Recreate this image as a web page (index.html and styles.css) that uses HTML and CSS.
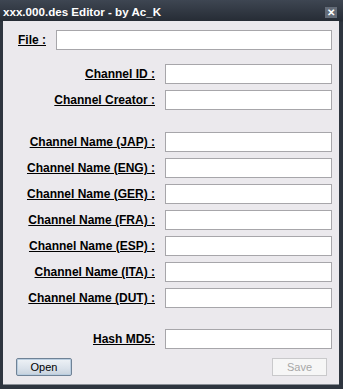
FILE: index.html
```html
<!DOCTYPE html>
<html>
<head>
<meta charset="utf-8">
<link rel="stylesheet" href="styles.css">
</head>
<body>
<div class="window">
  <div class="titlebar">
    <span class="title">xxx.000.des Editor - by Ac_K</span>
    <span class="close">✕</span>
  </div>
  <div class="client">
    <div class="row file-row">
      <label class="file-label">File :</label>
      <div class="input"></div>
    </div>
    <div class="group g1">
      <div class="row"><label>Channel ID :</label><div class="input"></div></div>
      <div class="row"><label>Channel Creator :</label><div class="input"></div></div>
    </div>
    <div class="group g2">
      <div class="row"><label>Channel Name (JAP) :</label><div class="input"></div></div>
      <div class="row"><label>Channel Name (ENG) :</label><div class="input"></div></div>
      <div class="row"><label>Channel Name (GER) :</label><div class="input"></div></div>
      <div class="row"><label>Channel Name (FRA) :</label><div class="input"></div></div>
      <div class="row"><label>Channel Name (ESP) :</label><div class="input"></div></div>
      <div class="row"><label>Channel Name (ITA) :</label><div class="input"></div></div>
      <div class="row"><label>Channel Name (DUT) :</label><div class="input"></div></div>
    </div>
    <div class="group g3">
      <div class="row"><label>Hash MD5:</label><div class="input"></div></div>
    </div>
    <div class="buttons">
      <button class="btn open">Open</button>
      <button class="btn save" disabled>Save</button>
    </div>
  </div>
</div>
</body>
</html>
```
FILE: styles.css
```css
html, body {
  margin: 0;
  padding: 0;
  background: #2d343e;
}
.window {
  width: 343px;
  height: 389px;
  box-sizing: border-box;
  background: linear-gradient(#3e4652, #262c35 21px, #2e353f 22px);
  padding: 0 4px 4px 3px;
  display: flex;
  flex-direction: column;
  font-family: "Liberation Sans", Arial, sans-serif;
}
.titlebar {
  height: 21px;
  display: flex;
  align-items: center;
  justify-content: space-between;
  flex-shrink: 0;
}
.title {
  color: #ffffff;
  font-weight: bold;
  font-size: 11.6px;
  margin-top: 1px;
}
.close {
  width: 12px;
  height: 11px;
  background: #646c78;
  color: #ffffff;
  font-size: 10px;
  font-weight: bold;
  line-height: 11px;
  text-align: center;
  margin-right: 2px;
  margin-top: 3px;
}
.client {
  flex: 1;
  background: #ebe9ed;
  padding: 9px 7px 0 0;
  box-sizing: border-box;
  border-bottom: 1px solid #8a8f96;
}
.row {
  display: flex;
  align-items: center;
  height: 20px;
}
.row label {
  width: 152px;
  flex-shrink: 0;
  box-sizing: border-box;
  text-align: right;
  font-weight: bold;
  font-size: 12px;
  text-decoration: underline;
  color: #000;
  margin-right: 10px;
  white-space: nowrap;
}
.file-row .file-label {
  width: 30px;
  text-align: left;
  margin-left: 15px;
  margin-right: 8px;
}
.input {
  flex: 1;
  height: 20px;
  box-sizing: border-box;
  background: #ffffff;
  border: 1px solid #a7a6aa;
}
.group {
  display: flex;
  flex-direction: column;
  gap: 6px;
}
.g1 { margin-top: 14px; }
.g2 { margin-top: 22px; }
.g3 { margin-top: 21px; }
.buttons {
  display: flex;
  justify-content: space-between;
  margin-top: 9px;
  padding-left: 13px;
  padding-right: 5px;
}
.btn {
  height: 18px;
  width: 56px;
  font-family: "Liberation Sans", Arial, sans-serif;
  font-size: 11px;
  padding: 0;
  box-sizing: border-box;
}
.open {
  background: linear-gradient(#eef2f6, #d9e1ea 60%, #c7d2dd);
  border: 1px solid #6f8296;
  border-radius: 2px;
  color: #000;
  box-shadow: inset 0 0 0 1px #b9cde0;
}
.save {
  background: #f6f6f6;
  border: 1px solid #c9c9cb;
  color: #a7a7a7;
  width: 55px;
}
```
